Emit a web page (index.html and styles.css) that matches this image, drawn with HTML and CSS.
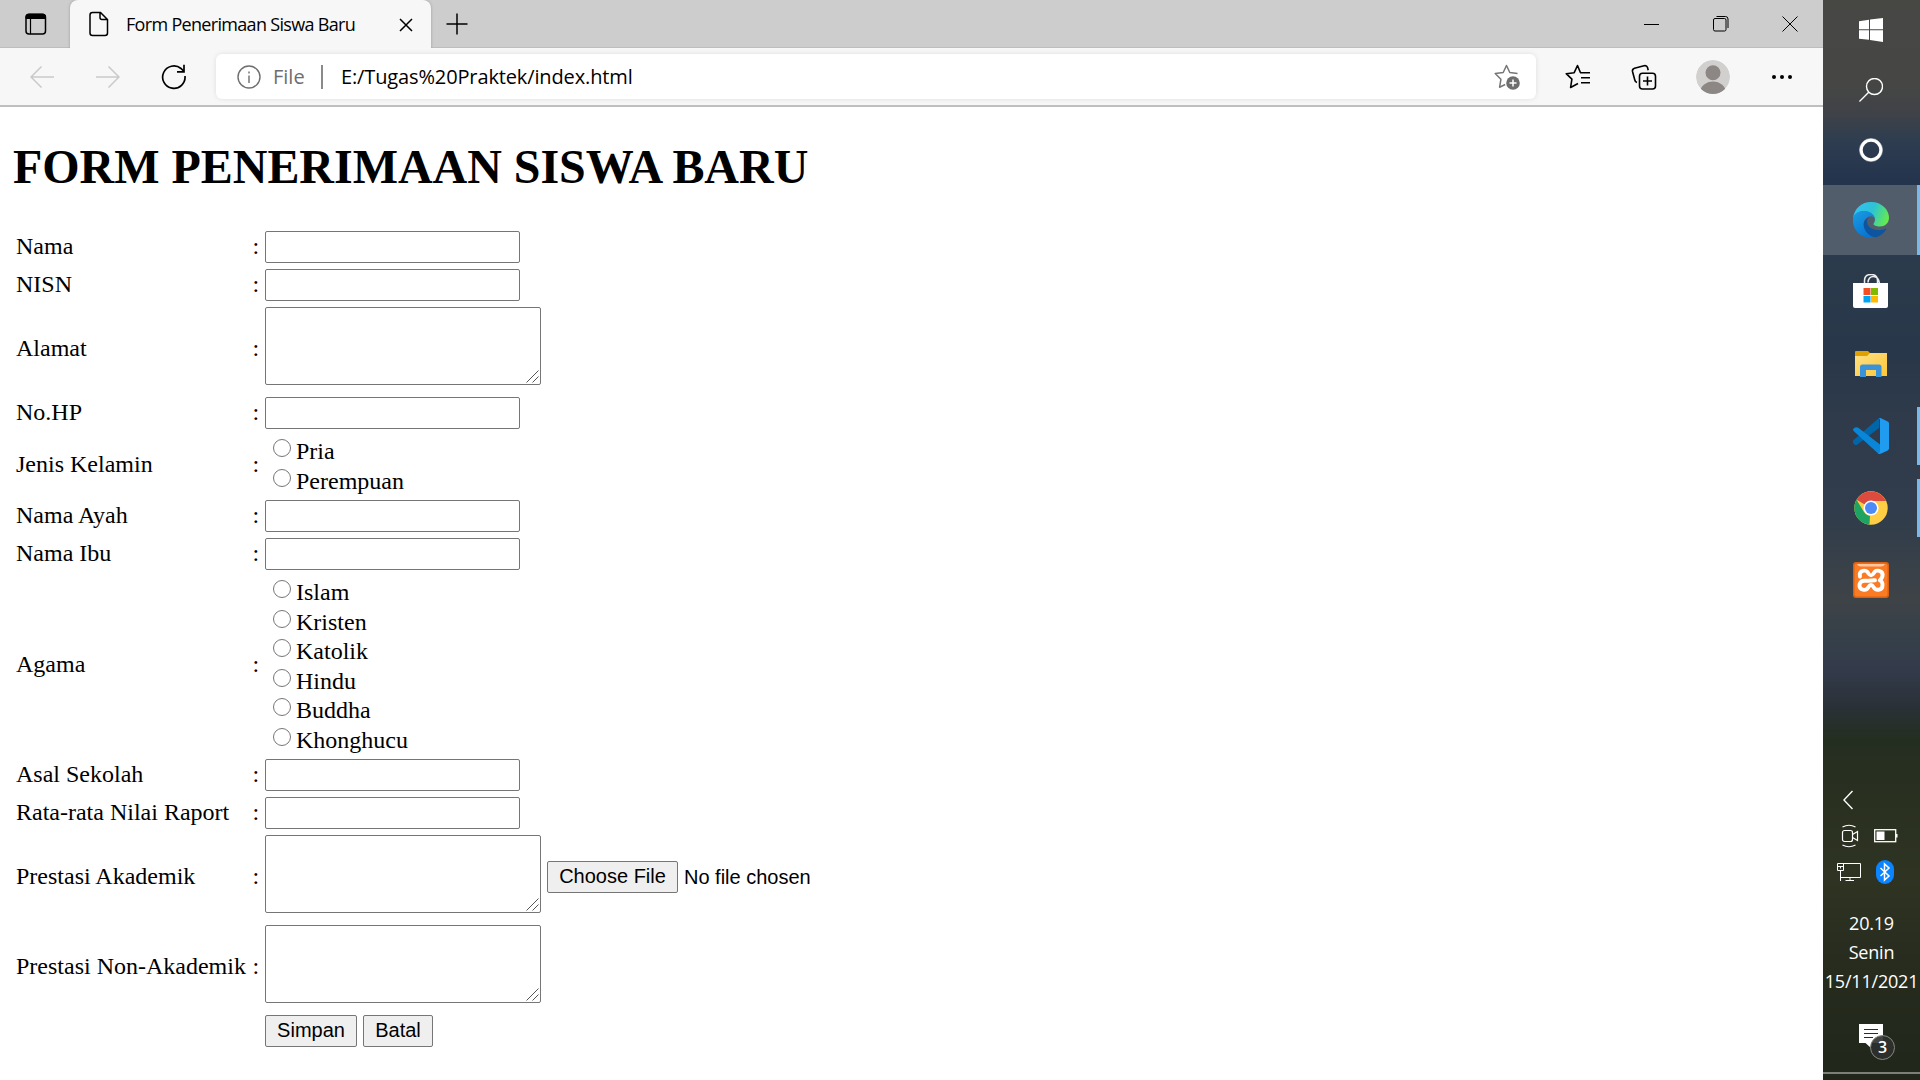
FILE: index.html
```html
<!DOCTYPE html>
<html lang="id">
<head>
<meta charset="utf-8">
<title>Form Penerimaan Siswa Baru</title>
<link rel="stylesheet" href="styles.css">
</head>
<body>
<div class="desktop">
  <div class="browser">
    <header class="tabbar">
      <svg class="tab-actions" width="22" height="22" viewBox="0 0 22 22"><rect x="1" y="1.500" width="19.500" height="19.500" rx="3" fill="none" stroke="#000" stroke-width="1.500"/><path d="M1 5.500V3.500Q1 1 3.500 1h14.500Q20.500 1 20.500 3.500V5.500z" stroke="#000"/><path d="M5.500 6v15" stroke="#000" stroke-width="1.200"/></svg>
      <div class="tab">
        <svg width="20" height="26" viewBox="0 0 20 26" fill="none" stroke="#000" stroke-width="1.500"><path d="M3.500 1.500h8l7 7v13.500q0 2.500-2.500 2.500h-12.500q-2.500 0-2.500-2.500v-18q0-2.500 2.500-2.500zM11 1.500v5q0 2 2 2h5.500"/></svg>
        <span class="tab-title">Form Penerimaan Siswa Baru</span>
        <svg class="tab-close" width="14" height="14" viewBox="0 0 14 14" stroke="#000" stroke-width="1.500"><path d="M1 1l12 12M13 1L1 13"/></svg>
      </div>
      <svg class="new-tab" width="22" height="22" viewBox="0 0 22 22" stroke="#000" stroke-width="1.500"><path d="M11 .5v21M.5 11h21"/></svg>
      <div class="window-controls">
        <svg width="16" height="16" viewBox="0 0 16 16" stroke="#000"><path d="M0 8.500h15"/></svg>
        <svg width="16" height="16" viewBox="0 0 16 16" fill="none" stroke="#000"><rect x=".5" y="2.500" width="12.500" height="12.500" rx="1.500"/><path d="M3.500.500h9q2.500 0 2.500 2.500v9"/></svg>
        <svg width="16" height="16" viewBox="0 0 16 16" stroke="#000"><path d="M.5.5l15 15M15.500.5l-15 15"/></svg>
      </div>
    </header>
    <nav class="toolbar">
      <svg class="nav-icon" width="24" height="22" viewBox="0 0 24 22" fill="none" stroke="#cacaca" stroke-width="1.500"><path d="M24 11H1M11.500.5L1 11l10.500 10.500"/></svg>
      <svg class="nav-icon" width="24" height="22" viewBox="0 0 24 22" fill="none" stroke="#cacaca" stroke-width="1.500"><path d="M0 11h23M12.500.5L23 11 12.500 21.500"/></svg>
      <svg class="nav-icon reload" width="26" height="26" viewBox="0 0 26 26" fill="none" stroke="#000" stroke-width="1.700"><path d="M24 12a11.200 11.200 0 1 1-4-7.500l3 3M23 .8v7h-7"/></svg>
      <div class="address">
        <svg width="24" height="24" viewBox="0 0 24 24" fill="none" stroke="#6e6e6e" stroke-width="1.400"><circle cx="12" cy="12" r="11"/><path d="M12 10.500v7.500M12 6.500v2"/></svg>
        <span class="scheme">File</span>
        <span class="divider"></span>
        <span class="url">E:/Tugas%20Praktek/index.html</span>
        <svg class="add-star" width="26" height="26" viewBox="0 0 26 26"><path d="M23.500 9.500l-7.700-1L12.500 1.500 9.200 8.500l-8 1 5.700 5.800-1.300 7.900 5.600-2.700" fill="none" stroke="#767676" stroke-width="1.500" stroke-linejoin="round"/><circle cx="19" cy="19" r="6.800" fill="#6e6e6e"/><path d="M19 15.500v7M15.500 19h7" stroke="#fff" stroke-width="1.500"/></svg>
      </div>
      <svg class="tool" width="26" height="26" viewBox="0 0 26 26" fill="none" stroke="#000" stroke-width="1.600" stroke-linejoin="round"><path d="M15 8.700h10M16 13.700h9M16 18.700h9M15.500 8.700L12.500 1.500 9.200 8.700l-8 1 5.700 5.500-1.300 8.300 7.400-4"/></svg>
      <svg class="tool" width="26" height="26" viewBox="0 0 26 26" fill="none" stroke="#000" stroke-width="1.600"><rect x="8.500" y="9.200" width="16" height="15.800" rx="3"/><path d="M16.500 12.500v9M12 17h9M6 18.500q-1.800-.5-2.200-2.500L1.500 7.500Q1 5 3.500 4.200l9.500-2.500q2.800-.6 3.500 1.800l.7 2.700"/></svg>
      <svg class="avatar" width="34" height="34" viewBox="0 0 34 34"><defs><clipPath id="face"><circle cx="17" cy="17" r="17"/></clipPath></defs><g clip-path="url(#face)"><circle cx="17" cy="17" r="17" fill="#d2d0ce"/><circle cx="17" cy="12.700" r="7.500" fill="#8c8785"/><ellipse cx="17" cy="33" rx="13" ry="11.500" fill="#8c8785"/></g></svg>
      <svg class="more" width="20" height="6" viewBox="0 0 20 6"><circle cx="2" cy="3" r="2"/><circle cx="10" cy="3" r="2"/><circle cx="18" cy="3" r="2"/></svg>
    </nav>
    <main class="page">
      <h1>FORM PENERIMAAN SISWA BARU</h1>
      <form class="form">
        <span>Nama</span><span>:</span><div><input class="text" type="text"></div>
        <span>NISN</span><span>:</span><div><input class="text" type="text"></div>
        <span>Alamat</span><span>:</span>
        <div class="area-row"><div class="area"><textarea></textarea><svg class="grip" width="13" height="13" viewBox="0 0 13 13"><path d="M.5 12.500l12-12M6.500 12.500l6-6"/></svg></div></div>
        <span>No.HP</span><span>:</span><div><input class="text" type="text"></div>
        <span class="tall">Jenis Kelamin</span><span class="tall">:</span>
        <div class="choices">
          <label><input type="radio" name="jk">Pria</label>
          <label><input type="radio" name="jk">Perempuan</label>
        </div>
        <span>Nama Ayah</span><span>:</span><div><input class="text" type="text"></div>
        <span>Nama Ibu</span><span>:</span><div><input class="text" type="text"></div>
        <span class="tall">Agama</span><span class="tall">:</span>
        <div class="choices">
          <label><input type="radio" name="agama">Islam</label>
          <label><input type="radio" name="agama">Kristen</label>
          <label><input type="radio" name="agama">Katolik</label>
          <label><input type="radio" name="agama">Hindu</label>
          <label><input type="radio" name="agama">Buddha</label>
          <label><input type="radio" name="agama">Khonghucu</label>
        </div>
        <span>Asal Sekolah</span><span>:</span><div><input class="text" type="text"></div>
        <span>Rata-rata Nilai Raport</span><span>:</span><div><input class="text" type="text"></div>
        <span>Prestasi Akademik</span><span>:</span>
        <div class="area-row"><div class="area"><textarea></textarea><svg class="grip" width="13" height="13" viewBox="0 0 13 13"><path d="M.5 12.500l12-12M6.500 12.500l6-6"/></svg></div><button class="file" type="button">Choose File</button><span class="file-name">No file chosen</span></div>
        <span>Prestasi Non-Akademik</span><span>:</span>
        <div class="area-row"><div class="area"><textarea></textarea><svg class="grip" width="13" height="13" viewBox="0 0 13 13"><path d="M.5 12.500l12-12M6.500 12.500l6-6"/></svg></div></div>
        <div class="actions"><button class="save" type="button">Simpan</button><button class="cancel" type="button">Batal</button></div>
      </form>
    </main>
  </div>
  <aside class="taskbar">
    <div class="slot"><svg width="24" height="24" viewBox="0 0 24 24" fill="#fff"><path d="M0 3.200L10 1.800v9.400H0zM11 1.600L24 0v11.200H11zM0 12.200h10v9.600L0 20.700zM11 12.200h13V24l-13-1.900z"/></svg></div>
    <div class="slot"><svg width="24" height="24" viewBox="0 0 24 24" fill="none" stroke="#fff" stroke-width="1.400"><circle cx="15.500" cy="8.500" r="8"/><path d="M9.700 14.200L.4 23.500"/></svg></div>
    <div class="slot"><svg width="24" height="24" viewBox="0 0 24 24" fill="none" stroke="#fff"><circle cx="12" cy="12" r="9.800" stroke-width="3"/><circle cx="12" cy="12" r="11.500" stroke-opacity=".5"/></svg></div>
    <div class="app active running">
      <svg width="36" height="36" viewBox="0 0 36 36"><defs>
        <linearGradient id="eg" x1="0" y1=".3" x2="1" y2=".6"><stop offset="0" stop-color="#35c1f1"/><stop offset=".5" stop-color="#2cc3d6"/><stop offset="1" stop-color="#66eb4a"/></linearGradient>
        <linearGradient id="eb" x1="0" y1="0" x2=".6" y2="1"><stop offset="0" stop-color="#1b9de2"/><stop offset="1" stop-color="#0873d2"/></linearGradient></defs>
        <path d="M0 17C1 6 9 0 18 0c11 0 18 8 18 15.500 0 6-4.500 9-9 9-4 0-6.500-1.200-6.500-2.500 0-1 1.500-1.500 1.500-4.500 0-3-4-8.500-11-8.500C5 9 1 13 0 17z" fill="url(#eg)"/>
        <path d="M0 17c.5-5 5-8 11-8 6.500 0 11 4.500 11 8-1-2-3-3-5-2.500C13 15 10 19 11 24c1.200 6 6 9.500 11 11.500C11 38-1 30 0 17z" fill="url(#eb)"/>
        <path d="M17 14.500c-4 2-7.500 5-6 10.500 1.500 6 7 10.500 12 10.300 4.500-1.500 8-4.300 10.200-7.800.4-.8-.2-1.300-1-.8-7 3.500-18.200.5-18.200-7.200 0-2.200 1.200-4 3-5z" fill="#0d559f"/></svg>
    </div>
    <div class="app">
      <svg width="36" height="36" viewBox="0 0 36 36"><path d="M11.500 10V6.500q0-6 6.500-6t6.500 6V10M15 8.500q.5-6 5.500-6t6 7" fill="none" stroke="#eee" stroke-width="1.500"/><path d="M0 9h35v23q0 2-2 2H2q-2 0-2-2z" fill="#fff"/><path d="M10.500 14h7v7h-7z" fill="#f25022"/><path d="M18 14h7v7h-7z" fill="#7fba00"/><path d="M10.500 22h7v6.500h-7z" fill="#00a4ef"/><path d="M18 22h7v6.500h-7z" fill="#ffb900"/></svg>
    </div>
    <div class="app">
      <svg width="36" height="36" viewBox="0 0 36 36"><defs><linearGradient id="fo" x2="1" y2="1"><stop stop-color="#ffe085"/><stop offset="1" stop-color="#fbc736"/></linearGradient></defs><path d="M2 6q0-1 1-1h12l3 3-3 3H2z" fill="#e0a000"/><path d="M2 10h12l3-3h17v23H2z" fill="url(#fo)"/><path d="M7 31V21q0-2.500 2.500-2.500h16.500Q28.500 18.500 28.500 21v10h-5.500v-7h-10v7z" fill="#3a93d8"/></svg>
    </div>
    <div class="app running inset">
      <svg width="36" height="36" viewBox="0 0 36 36"><path d="M0 22.500L26 0v10L4.500 26.500q-1.700 1-3 0-2.500-2-1.500-4z" fill="#0065a9"/><path d="M.9 13.300Q-.8 11.800.9 10.300L2 9.600q1.500-1 3.300.2L27 26.500V36q-1.500 0-3-1.500z" fill="#0a86d8"/><path d="M26 .3q1-.5 2 0l6.700 3.200Q36 4.200 36 5.500v25q0 1.200-1.300 2l-6.500 3.100q-1.700.7-3.200-.6Q27 35.600 27 33V3Q27 .8 26 .3z" fill="#1f9cf0"/></svg>
    </div>
    <div class="app running inset">
      <svg width="34" height="34" viewBox="0 0 34 34"><circle cx="17" cy="17" r="16.700" fill="#ffce44"/><path d="M17 17L2.500 8.700A16.700 16.700 0 0 1 31.500 9H17z" fill="#dc4b3e"/><path d="M17 9h14.500l.8 1H17z" fill="#dc4b3e"/><path d="M2.500 8.700L10 21q2.500 4 7.500 4L16.500 33.700A16.700 16.700 0 0 1 2.500 8.700z" fill="#1da362"/><path d="M24 20.500l-7.500 13.200-1-.1L16 25z" fill="#ffce44"/><circle cx="17" cy="17" r="7.600" fill="#fff"/><circle cx="17" cy="17" r="6" fill="#4c8bf5"/></svg>
    </div>
    <div class="app">
      <svg width="36" height="36" viewBox="0 0 36 36"><rect width="36" height="36" rx="3" fill="#d9600f"/><rect x="1.500" y="1.500" width="33" height="33" rx="2" fill="#fb7a24"/><path d="M4 2h28q-1 2.500-4 2.500H8Q5 4.500 4 2z" fill="#fdc8a0"/><path d="M7 14.500C5.500 8 13.500 7 15.300 11.300Q18 15.500 20.700 11.300C22.500 7 30.500 8 29.500 14Q29 16.500 26.800 18.200 29.800 20 29.500 23C29.500 29 22.500 29 20.500 25Q18 21 15.500 25C13.500 29.500 5.500 28.500 6.500 22.500Q7.500 18.800 11.500 18.800H14M22 18.300L15.500 18.800" fill="none" stroke="#fff" stroke-width="3.900" stroke-linecap="round" stroke-linejoin="round"/></svg>
    </div>
    <div class="tray">
      <svg class="chevron" width="10" height="20" viewBox="0 0 10 20" fill="none" stroke="#fff" stroke-width="1.400"><path d="M9.500 1L.9 10l8.600 9"/></svg>
      <div class="tray-row first">
        <svg width="24" height="24" viewBox="0 0 24 24" fill="none" stroke="#fff" stroke-width="1.200"><rect x="5.500" y="6.500" width="10" height="11" rx="2"/><path d="M15.500 10.500l5-3v9l-5-3M5.500 3q6.500-3.500 13 0M5.500 21q6.500 3.500 13 0"/></svg>
        <svg width="24" height="14" viewBox="0 0 24 14"><rect x=".7" y=".7" width="21" height="12" fill="none" stroke="#fff" stroke-width="1.300"/><path d="M2.500 2.500h8v8.500h-8zM22 5h1.500v3.500H22z" fill="#fff"/></svg>
      </div>
      <div class="tray-row second">
        <svg width="24" height="20" viewBox="0 0 24 20" fill="none" stroke="#fff" stroke-width="1"><path d="M6 1.500h17.500v14H4M13 15.500v3M8.500 18.500h8.500M3.500 9v10M.5 1.500h6v7h-6zM.5 4.500h6M3.500 4.500v2"/></svg>
        <svg width="18" height="24" viewBox="0 0 18 24"><rect width="18" height="24" rx="9" fill="#0a84ff"/><path d="M4.500 8l8.500 8-4.500 4V4l4.500 4-8.500 8" fill="none" stroke="#fff" stroke-width="1.500"/></svg>
      </div>
    </div>
    <div class="clock"><span>20.19</span><span>Senin</span><span>15/11/2021</span></div>
    <div class="notice">
      <svg width="24" height="24" viewBox="0 0 24 24"><path d="M0 0h24v19H12l0 5-5.500-5H0z" fill="#fff"/><path d="M5 5.500h14M5 9.500h14M5 13.500h9" stroke="#2a3020"/></svg>
      <span class="count">3</span>
    </div>
    <div class="show-desktop"></div>
  </aside>
</div>
</body>
</html>
```
FILE: styles.css
```css
* { box-sizing: border-box; }
body { margin: 0; overflow: hidden; }
svg { display: block; flex: none; }
.desktop { display: flex; width: 1920px; height: 1080px; }
.browser { width: 1823px; background: #fff; display: flex; flex-direction: column; }

.tabbar { height: 48px; background: #cdcdcd; display: flex; align-items: center; border-bottom: 1px solid #bdbdbd; }
.tab-actions { margin: 1px 0 0 25px; }
.tab { align-self: flex-start; height: 48px; width: 361px; margin-left: 23px; background: #f7f7f7; border-radius: 8px 8px 0 0; display: flex; align-items: center; padding: 0 19px; box-shadow: 0 0 3px rgba(0,0,0,.25); clip-path: inset(0 -4px 0 -4px); }
.tab-title { font: 18px "Open Sans", "Noto Sans", sans-serif; margin-left: 17px; letter-spacing: -.68px; white-space: nowrap; width: 273px; flex: none; }
.tab-close { margin-top: 1px; }
.new-tab { margin-left: 15px; }
.window-controls { display: flex; gap: 53px; margin: 0 25px 0 auto; }

.toolbar { height: 59px; background: #f7f7f7; border-bottom: 2px solid #bfbfbf; display: flex; align-items: center; padding-left: 30px; }
.nav-icon { margin-right: 42px; }
.reload { margin: 0 29px 0 -1px; }
.address { width: 1320px; height: 45px; background: #fff; border-radius: 6px; box-shadow: 0 0 5px rgba(0,0,0,.1); display: flex; align-items: center; padding-left: 21px; font: 20px "Open Sans", "Noto Sans", sans-serif; }
.scheme { margin-left: 12px; color: #6e6e6e; width: 48px; }
.divider { width: 2px; height: 24px; background: #8a8a8a; margin-right: 18px; }
.url { white-space: nowrap; letter-spacing: -.13px; }
.add-star { margin: 0 16px 0 auto; }
.tool { margin-left: 29px; margin-right: 11px; }
.avatar { margin-left: 28px; }
.more { margin-left: 42px; }

.page { padding: 32px 12px 0; font: 24px/27px "Liberation Serif", "Times New Roman", serif; }
h1 { font-size: 48px; line-height: 55px; margin: 0; padding-left: 1px; letter-spacing: -.03px; white-space: nowrap; }
.form { display: grid; grid-template-columns: 230.5px 6px 1fr; gap: 6px; align-items: center; margin-top: 37px; padding-left: 4px; white-space: nowrap; }
.form > span { padding-bottom: 2px; }
.form > .tall { padding-bottom: 0; }
.form > div { display: flex; padding-left: .5px; }
.text { display: block; width: 255px; height: 32px; border: 1px solid #767676; border-radius: 2px; padding: 0; margin: 0; }
.area { position: relative; width: 276px; height: 78px; }
textarea { display: block; width: 276px; height: 78px; border: 1px solid #767676; border-radius: 2px; margin: 0; resize: none; }
.grip { position: absolute; right: 2px; bottom: 2px; fill: none; stroke: #555; }
.form .area-row { height: 84px; align-items: flex-start; }
.form .choices { flex-direction: column; }
.choices label { height: 29.5px; display: flex; align-items: flex-start; line-height: 32px; }
.choices input { width: 18px; height: 18px; margin: 4px 5px 0 8px; }
button { height: 32px; border: 1px solid #767676; border-radius: 2px; background: #efefef; color: #000; font: 20px "Liberation Sans", Arial, sans-serif; padding: 0 0 2px; }
.file { width: 131px; margin: 26px 6px 0; }
.file-name { font: 20px/32px "Liberation Sans", Arial, sans-serif; margin-top: 26px; }
.form .actions { grid-column: 3; gap: 6px; }
.save { width: 92px; }
.cancel { width: 70px; }

.taskbar { width: 97px; display: flex; flex-direction: column; color: #fff; background: linear-gradient(#474744 0, #464744 80px, #3f4248 115px, #2e3d50 140px, #24344d 180px, #2c3b4c 260px, #283749 350px, #2f3b4b 420px, #313d4b 520px, #3e4347 600px, #364049 635px, #333b4b 670px, #2a3138 705px, #242e20 740px, #2a3020 800px, #2e3322 880px, #272c1f 960px, #20261a 1080px); }
.slot { height: 60px; display: flex; align-items: center; justify-content: center; padding-right: 1px; }
.slot + .slot + .slot + .app { margin-top: 5px; }
.app { height: 70px; margin-bottom: 2px; display: flex; align-items: center; justify-content: center; position: relative; padding-right: 1px; }
.active { background: #525d6c; }
.running::after { content: ""; position: absolute; right: 0; top: 0; bottom: 0; width: 3px; background: #76b9ed; }
.inset::after { top: 6px; bottom: 6px; }
.tray { margin-top: 173px; }
.chevron { margin-left: 20px; }
.tray-row { display: flex; align-items: center; }
.first { margin: 14px 0 0 14px; gap: 13px; }
.second { margin: 12px 0 0 14px; gap: 15px; }
.clock { margin-top: 25px; display: flex; flex-direction: column; align-items: center; font: 18px/29px "Open Sans", "Noto Sans", sans-serif; letter-spacing: -.2px; }
.notice { margin: 28px 0 0 36px; position: relative; width: 24px; height: 24px; }
.count { position: absolute; left: 11px; top: 11px; width: 25px; height: 25px; border-radius: 50%; background: rgba(45,48,45,.9); border: 1px solid #85877f; font: 600 16px/23px "Open Sans", sans-serif; text-align: center; }
.show-desktop { margin-top: auto; height: 8px; border-top: 2px solid #7d7f78; }
```
